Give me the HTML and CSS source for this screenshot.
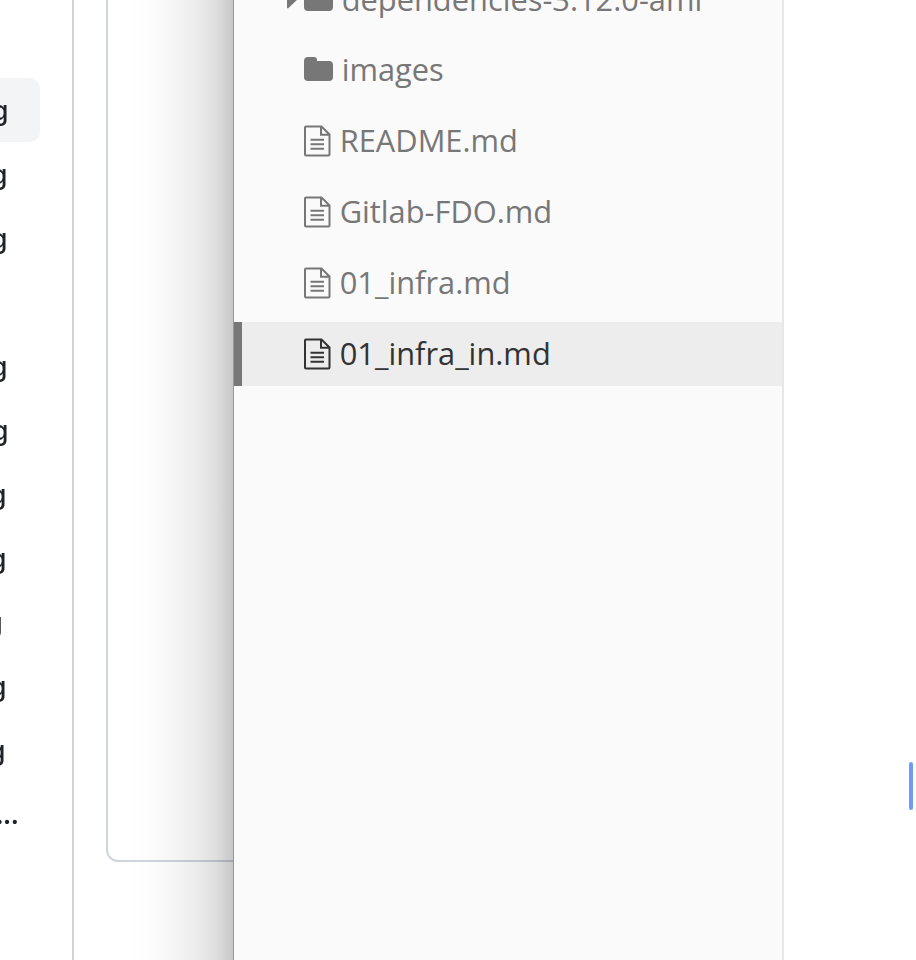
FILE: index.html
```
<!DOCTYPE html>
<html lang="en">
<head>
<meta charset="utf-8">
<title>Files</title>
<link rel="stylesheet" href="styles.css">
</head>
<body>
<svg class="defs" width="0" height="0">
  <symbol id="folder" viewBox="0 0 30 26"><path d="M4 1H10Q13 1 13 4V5H25Q29 5 29 9V21Q29 25 25 25H4Q0 25 0 21V5Q0 1 4 1Z" fill="currentColor"/></symbol>
  <symbol id="file" viewBox="0 0 28 32"><path d="M1 2.5Q1 1.5 2 1.5H17.5L25.5 9.5V29.5Q25.5 30.5 24.5 30.5H2Q1 30.5 1 29.5ZM17 1.5V9.8H25M6.5 14.8H20M6.5 19.3H20M6.5 23.7H20" fill="none" stroke="currentColor" stroke-width="2"/></symbol>
</svg>
<div class="screen">
  <aside class="pages">
    <div class="page active r1"><span>g</span></div>
    <div class="page r2"><span>g</span></div>
    <div class="page r2"><span>g</span></div>
    <div class="page"></div>
    <div class="page r2"><span>g</span></div>
    <div class="page r1"><span>g</span></div>
    <div class="page r3"><span>g</span></div>
    <div class="page r3"><span>g</span></div>
    <div class="page r5"><span>g</span></div>
    <div class="page r3"><span>g</span></div>
    <div class="page r4"><span>g</span></div>
    <div class="page more"><span>...</span></div>
  </aside>
  <div class="backdrop">
    <div class="box"></div>
    <div class="shade"></div>
  </div>
  <nav class="tree">
    <div class="row parent"><svg class="arrow" viewBox="0 0 13 24"><path d="M0 0L13 12L1 23.5L0 23Z" fill="currentColor"/></svg><svg class="folder"><use href="#folder"/></svg><span class="name">dependencies-3.12.0-aml</span></div>
    <div class="row"><svg class="folder"><use href="#folder"/></svg><span class="name">images</span></div>
    <div class="row"><svg class="file"><use href="#file"/></svg><span class="name">README.md</span></div>
    <div class="row"><svg class="file"><use href="#file"/></svg><span class="name">Gitlab-FDO.md</span></div>
    <div class="row"><svg class="file"><use href="#file"/></svg><span class="name">01_infra.md</span></div>
    <div class="row selected"><svg class="file"><use href="#file"/></svg><span class="name">01_infra_in.md</span></div>
  </nav>
  <main class="editor"><div class="caret"></div></main>
</div>
</body>
</html>
```
FILE: styles.css
```
* { box-sizing: border-box; }
body { margin: 0; background: #fff; }
.defs { position: absolute; }
.screen { display: flex; width: 916px; height: 960px; overflow: hidden; }

.pages { width: 74px; flex: none; padding-top: 78px; border-right: 2px solid #d1d5da; font: 500 27px/65px Inter, "Liberation Sans", sans-serif; color: #1f2328; will-change: transform; }
.page { display: flex; justify-content: flex-end; width: 40px; height: 64px; overflow: hidden; border-radius: 0 10px 10px 0; }
.active { background: #f3f4f6; }
.r1 { padding-right: 31.5px; }
.r2 { padding-right: 32.5px; }
.r3 { padding-right: 33.5px; }
.r4 { padding-right: 34.5px; }
.r5 { padding-right: 37.3px; }
.more { padding-right: 22px; font-weight: 600; letter-spacing: -1px; }

.backdrop { position: relative; flex: none; width: 160px; overflow: hidden; border-right: 1px solid #999; }
.box { width: 160px; height: 862px; margin-left: 32px; border: 2px solid #d0d5dd; border-top: 0; border-bottom-left-radius: 12px; }
.shade { position: absolute; inset: 0 0 0 54px; background: linear-gradient(to right, rgba(0,0,0,0), rgba(0,0,0,.008) 15%, rgba(0,0,0,.032) 40%, rgba(0,0,0,.075) 65%, rgba(0,0,0,.13) 84%, rgba(0,0,0,.22)); }

.tree { display: flex; flex-direction: column; gap: 7px; flex: none; width: 550px; height: 992px; margin-top: -32px; background: #fafafa; border-right: 2px solid #e7e7e7; font: 30.8px/64px "Open Sans", sans-serif; color: #777; }
.row { position: relative; display: flex; align-items: center; flex: none; height: 64px; padding-left: 70px; white-space: nowrap; }
.parent { margin-bottom: -1px; }
.selected { background: #ededed; color: #333; }
.selected::before { content: ""; position: absolute; left: 0; top: 0; width: 8px; height: 64px; background: #777; }
.arrow { position: absolute; left: 52.5px; top: 17px; width: 13px; height: 24px; }
.folder { width: 30px; height: 26px; margin-right: 8px; margin-top: -3px; }
.file { width: 28px; height: 32px; margin-right: 8px; }
.name { margin-top: -2px; margin-left: -0.3px; }

.editor { display: flex; justify-content: flex-end; flex: 1; padding: 762px 3px 0 0; }
.caret { width: 4px; height: 48px; border-radius: 2px; background: #6c9cf8; }
```
